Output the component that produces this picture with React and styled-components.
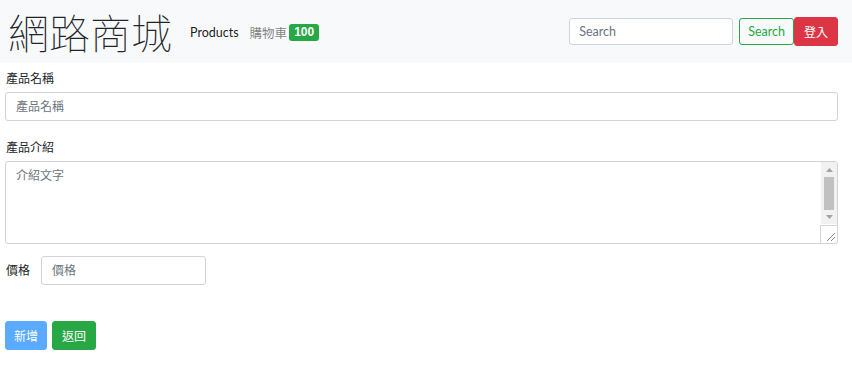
import styled, { createGlobalStyle } from "styled-components";

const GlobalStyle = createGlobalStyle`
  body {
    margin: 0;
    font-family: Lato, "Noto Sans CJK TC", sans-serif;
    font-size: 12.5px;
    color: #212529;
    background: #fff;
  }
  * { box-sizing: border-box; }
`;

const App = () => {
  return (
    <>
      <GlobalStyle />
      <NavBar>
        <Brand>網路商城</Brand>
        <NavLinks>
          <NavLink $active>Products</NavLink>
          <NavLink>
            購物車 <Badge>100</Badge>
          </NavLink>
        </NavLinks>
        <SearchForm>
          <SearchInput placeholder="Search" />
          <OutlineButton>Search</OutlineButton>
          <Button $bg="#dc3545" $pad={9}>登入</Button>
        </SearchForm>
      </NavBar>
      <Main>
        <Group>
          <Label>產品名稱</Label>
          <Input placeholder="產品名稱" />
        </Group>
        <Group>
          <Label>產品介紹</Label>
          <TextBox>
            <TextArea placeholder="介紹文字" />
            <FakeScroll>
              <Arrow viewBox="0 0 7 4"><path d="M0 4 L3.5 0 L7 4 Z" /></Arrow>
              <Thumb />
              <Arrow viewBox="0 0 7 4"><path d="M0 0 L3.5 4 L7 0 Z" /></Arrow>
            </FakeScroll>
            <Corner>
              <svg width="8" height="8" viewBox="0 0 8 8">
                <path d="M0 8 L8 0 M4 8 L8 4" stroke="#888" strokeWidth="1" />
              </svg>
            </Corner>
          </TextBox>
        </Group>
        <InlineGroup>
          <InlineLabel>價格</InlineLabel>
          <PriceInput placeholder="價格" />
        </InlineGroup>
        <Actions>
          <Button $bg="#5aabff">新增</Button>
          <Button $bg="#28a745" $pad={9}>返回</Button>
        </Actions>
      </Main>
    </>
  );
};

export default App;

const NavBar = styled.nav`
  display: flex;
  align-items: center;
  height: 63px;
  padding: 0 14px 0 8px;
  background: #f8f9fa;
`;

const Brand = styled.h1`
  margin: 0 18px 0 0;
  font-family: "Noto Sans CJK TC", sans-serif;
  font-weight: 100;
  font-size: 41px;
  line-height: 1;
  color: #212529;
`;

const NavLinks = styled.div`
  display: flex;
  align-items: center;
  gap: 11px;
  flex: 1;
  margin-top: 2px;
`;

const NavLink = styled.span`
  display: flex;
  align-items: center;
  gap: 2px;
  color: ${(p) => (p.$active ? "rgba(0,0,0,0.9)" : "rgba(0,0,0,0.5)")};
`;

const Badge = styled.span`
  display: inline-block;
  padding: 2px 5px;
  border-radius: 3px;
  background: #28a745;
  color: #fff;
  font-family: "Liberation Sans", sans-serif;
  font-weight: 700;
  font-size: 12px;
  line-height: 13px;
`;

const SearchForm = styled.div`
  display: flex;
  align-items: center;
`;

const SearchInput = styled.input`
  width: 164px;
  height: 27px;
  margin-right: 6px;
  padding: 4px 9px;
  border: 1px solid #ced4da;
  border-radius: 3px;
  font: inherit;
  color: #495057;
  &::placeholder { color: #6c757d; }
`;

const Button = styled.button`
  height: 29px;
  padding: 0 ${(p) => p.$pad ?? 8}px;
  border: 1px solid ${(p) => p.$bg};
  border-radius: 3px;
  background: ${(p) => p.$bg};
  color: #fff;
  font: inherit;
  font-size: 12px;
`;

const OutlineButton = styled(Button)`
  height: 27px;
  border-color: #28a745;
  background: transparent;
  color: #28a745;
  font-size: 12.5px;
`;

const Main = styled.main`
  padding: 8px 14px 0 5px;
`;

const Group = styled.div`
  display: flex;
  flex-direction: column;
  margin-bottom: 19px;
`;

const Label = styled.label`
  margin: 0 0 6px 1px;
  line-height: 15px;
  font-size: 12px;
`;

const InlineLabel = styled(Label)`
  margin: 0 0 0 1px;
`;

const Input = styled.input`
  width: 100%;
  height: 29px;
  padding: 4px 10px;
  border: 1px solid #ced4da;
  border-radius: 3px;
  font: inherit;
  font-size: 12px;
  color: #495057;
  &::placeholder { color: #6c757d; }
`;

const TextBox = styled.div`
  position: relative;
  height: 83px;
`;

const TextArea = styled.textarea`
  display: block;
  width: 100%;
  height: 83px;
  padding: 4px 28px 4px 10px;
  border: 1px solid #ced4da;
  border-radius: 3px;
  font: inherit;
  font-size: 12px;
  color: #495057;
  resize: none;
  &::placeholder { color: #6c757d; }
`;

const FakeScroll = styled.div`
  position: absolute;
  top: 1px;
  right: 1px;
  width: 16px;
  height: 62px;
  display: flex;
  flex-direction: column;
  align-items: center;
  padding: 6px 0 5px;
  background: #f1f1f1;
  pointer-events: none;
`;

const Arrow = styled.svg`
  width: 7px;
  height: 4px;
  fill: #a3a3a3;
`;

const Thumb = styled.div`
  width: 10px;
  flex: 1;
  margin: 5px 0;
  background: #c1c1c1;
`;

const Corner = styled.div`
  position: absolute;
  right: 0;
  bottom: 0;
  width: 18px;
  height: 19px;
  display: flex;
  align-items: flex-end;
  justify-content: flex-end;
  padding: 0 2px 2px 0;
  border: 1px solid #d4d4d4;
  border-radius: 0 0 3px 0;
  background: #fff;
  pointer-events: none;
`;

const InlineGroup = styled.div`
  display: flex;
  align-items: center;
  gap: 11px;
  margin-top: -7px;
`;

const PriceInput = styled(Input)`
  width: 165px;
`;

const Actions = styled.div`
  display: flex;
  gap: 5px;
  margin-top: 36px;
`;
